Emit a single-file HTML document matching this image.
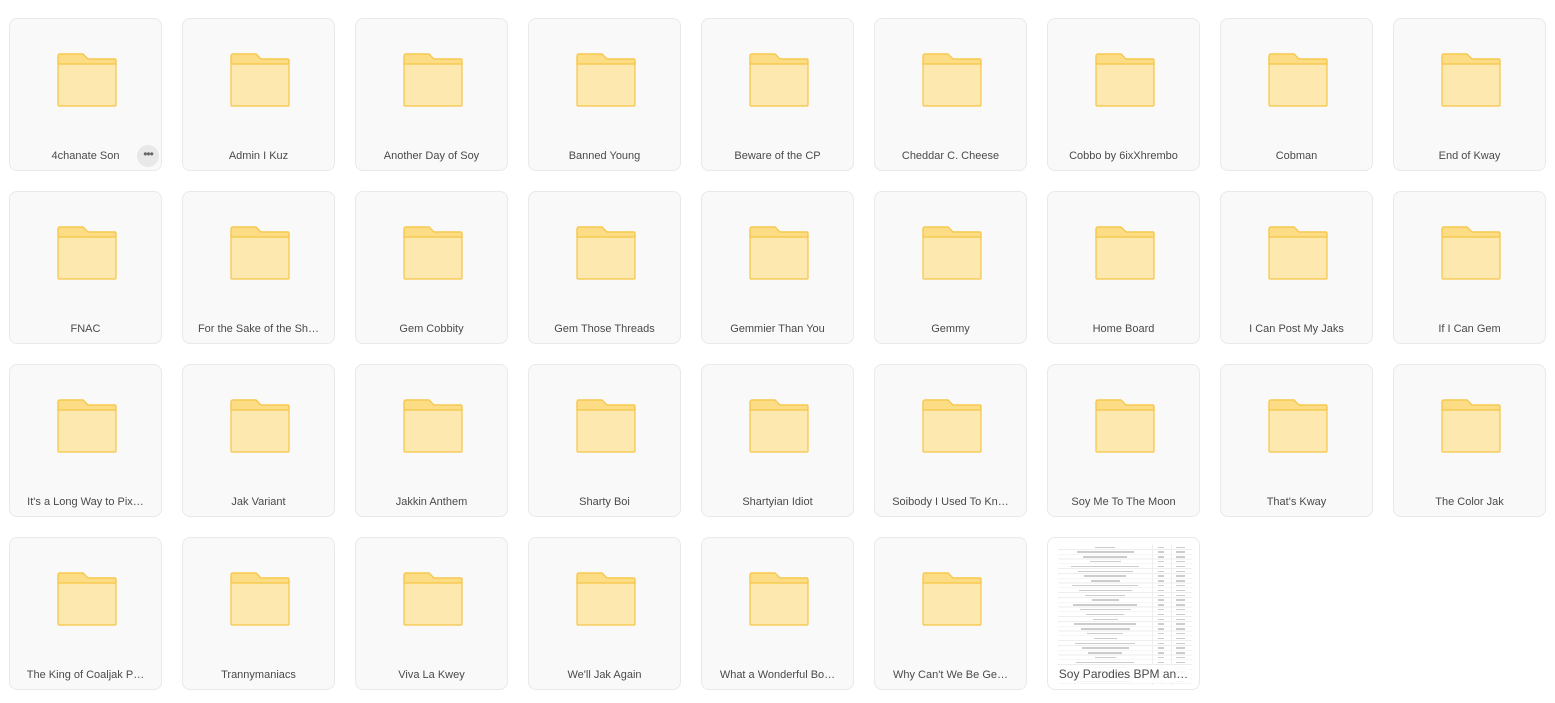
<!DOCTYPE html>
<html><head><meta charset="utf-8"><style>
body{margin:0;width:1555px;height:703px;background:#fff;position:relative;overflow:hidden;font-family:"Liberation Sans",sans-serif;}
.c{position:absolute;width:153px;height:153px;background:#f9f9f9;border:1px solid #e9e9e9;border-radius:8px;box-sizing:border-box;}
.c svg{position:absolute;left:47px;top:34px;}
.c .t{position:absolute;left:8px;right:8px;top:131px;text-align:center;font-size:11px;color:#4a4a4a;white-space:nowrap;overflow:hidden;}
.dots{position:absolute;left:127px;top:126px;width:22px;height:22px;border-radius:50%;background:#e8e8e8;color:#666;font-size:12px;text-align:center;line-height:18px;letter-spacing:-1px}
.s{background:#fff}
.sheet{position:absolute;left:10px;top:7px;width:134px;height:140px;
background:repeating-linear-gradient(#fff 0 4px,#eee 4px 4.8px);}
.sheet i{position:absolute;top:0;bottom:0;width:1px;background:#eee}
.sheet b{position:absolute;height:1.5px;background:#ccc}
</style></head><body>
<div id="g"></div>
<script>
const names=["4chanate Son","Admin I Kuz","Another Day of Soy","Banned Young","Beware of the CP","Cheddar C. Cheese","Cobbo by 6ix\u03A7hrembo","Cobman","End of Kway",
"FNAC","For the Sake of the Sh\u2026","Gem Cobbity","Gem Those Threads","Gemmier Than You","Gemmy","Home Board","I Can Post My Jaks","If I Can Gem",
"It's a Long Way to Pix\u2026","Jak Variant","Jakkin Anthem","Sharty Boi","Shartyian Idiot","Soibody I Used To Kn\u2026","Soy Me To The Moon","That's Kway","The Color Jak",
"The King of Coaljak P\u2026","Trannymaniacs","Viva La Kwey","We'll Jak Again","What a Wonderful Bo\u2026","Why Can't We Be Ge\u2026","Soy Parodies BPM an\u2026"];
const folder='<svg width="60" height="54" viewBox="0 0 60 54"><path d="M1 3Q1 1 3 1H26L31 6H58Q59 6 59 8V52Q59 53 58 53H2Q1 53 1 52Z" fill="#fde9b0" stroke="#f6c544" stroke-width="1.2"/><path d="M1 3Q1 1 3 1H26L31 6H58Q59 6 59 8V11H1Z" fill="#fddc86" stroke="#f6c544" stroke-width="1.2"/></svg>';
let h='';
names.forEach((n,i)=>{const col=i%9,row=Math.floor(i/9);const x=9+col*173,y=18+row*173;
if(i==33){let s='<div class="sheet"><i style="left:94px"></i><i style="left:113px"></i>';for(let k=0;k<29;k++){const yy=k*4.8+1.5;const w=20+((k*37)%50);s+=`<b style="top:${yy}px;left:${47-w/2}px;width:${w}px"></b><b style="top:${yy}px;left:100px;width:6px"></b><b style="top:${yy}px;left:118px;width:9px"></b>`;}s+='</div>';
h+=`<div class="c s" style="left:${x}px;top:${y}px">${s}<div class="t" style="background:rgba(255,255,255,.85);font-size:12px;top:127px;padding:2px 0">${n}</div></div>`;}
else h+=`<div class="c" style="left:${x}px;top:${y}px">${folder}<div class="t">${n}</div>${i==0?'<div class="dots">•••</div>':''}</div>`;});
document.getElementById('g').innerHTML=h;
</script>
</body></html>
